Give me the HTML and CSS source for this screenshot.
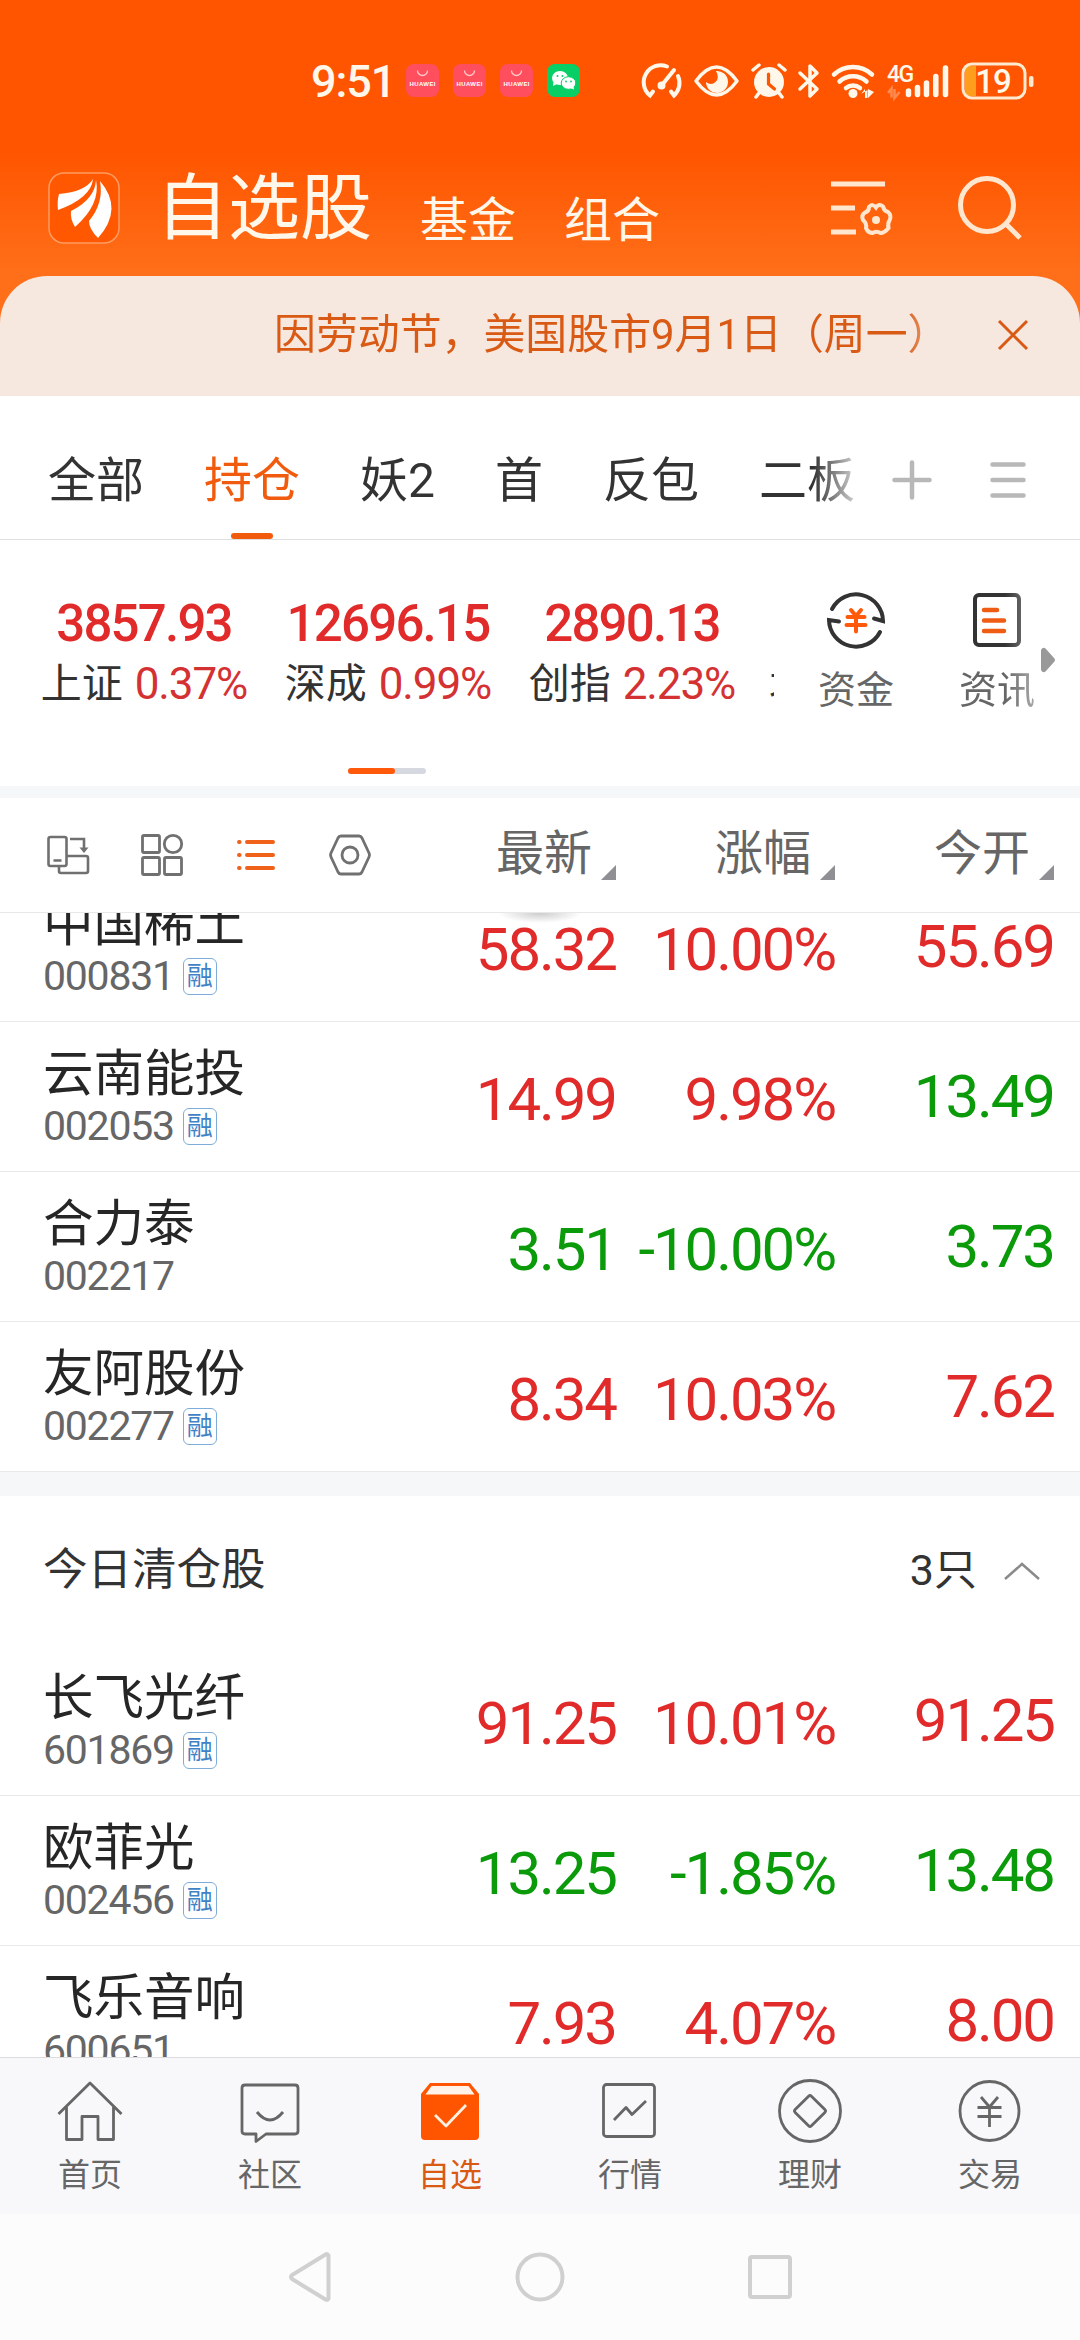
FILE: index.html
```html
<!DOCTYPE html>
<html lang="zh-CN">
<head>
  <meta charset="UTF-8" />
  <meta name="viewport" content="width=device-width, initial-scale=1.0"/>
  <title>自选股</title>
  <link rel="stylesheet" href="styles.css">
</head>
<body>
  <header class="header">
    <div class="status">
      <span class="clock">9:51</span>
      <div class="notifs">
        <svg class="notif" viewBox="0 0 33 33"><rect width="33" height="33" rx="8" fill="#ff4f5e"/><path d="M11.500 6.500a5 5 0 0 0 10 0" fill="none" stroke="#ffc9c9" stroke-width="1.300"/><text x="16.500" y="21.500" text-anchor="middle" textLength="26" class="brand">HUAWEI</text></svg>
        <svg class="notif" viewBox="0 0 33 33"><rect width="33" height="33" rx="8" fill="#ff4f5e"/><path d="M11.500 6.500a5 5 0 0 0 10 0" fill="none" stroke="#ffc9c9" stroke-width="1.300"/><text x="16.500" y="21.500" text-anchor="middle" textLength="26" class="brand">HUAWEI</text></svg>
        <svg class="notif" viewBox="0 0 33 33"><rect width="33" height="33" rx="8" fill="#ff4f5e"/><path d="M11.500 6.500a5 5 0 0 0 10 0" fill="none" stroke="#ffc9c9" stroke-width="1.300"/><text x="16.500" y="21.500" text-anchor="middle" textLength="26" class="brand">HUAWEI</text></svg>
        <svg class="notif" viewBox="0 0 33 33">
          <rect width="33" height="33" rx="8" fill="#07cf66"/>
          <path d="M6.500 18l-.5 4 4-2z" fill="#fff"/>
          <ellipse cx="13" cy="14" rx="8" ry="7" fill="#fff"/>
          <ellipse cx="21.500" cy="19" rx="7.300" ry="6.300" fill="#fff" stroke="#07cf66"/>
          <path d="M23 24l4 1.500-.5-3z" fill="#fff"/>
          <g fill="#07cf66"><circle cx="10.500" cy="12" r="1"/><circle cx="15.500" cy="12" r="1"/><circle cx="19" cy="17.500" r=".9"/><circle cx="24" cy="17.500" r=".9"/></g>
        </svg>
      </div>
      <div class="sys">
        <!-- data saver -->
        <svg width="40" height="36" viewBox="0 0 40 36" fill="none" stroke="#fff7ea" stroke-width="4" stroke-linecap="round"><path d="M25 3.500A17 17 0 0 0 8 32.500l3-4"/><path d="M36 13a17 17 0 0 1-4 19.500l-3-4"/><path d="M20 22L32 7" stroke-width="4"/><circle cx="19.500" cy="22.500" r="2"/></svg>
        <!-- eye comfort -->
        <svg width="47" height="36" viewBox="0 0 47 36"><path d="M3 18Q23.500-10 44 18 23.500 46 3 18z" fill="none" stroke="#fff7ea" stroke-width="3.500" stroke-linejoin="round"/><path d="M23 8a11 11 0 1 1-10 11q5 4 9.500 0T23 8z" fill="#fff7ea"/></svg>
        <!-- alarm -->
        <svg width="36" height="36" viewBox="0 0 36 36"><circle cx="18" cy="19" r="15" fill="#fff7ea"/><path d="M2 7l6-5M34 7l-6-5M8 30l-3 4M28 30l3 4" stroke="#fff7ea" stroke-width="3.500" stroke-linecap="round"/><path d="M17.500 11v10l6 5" fill="none" stroke="#ff5500" stroke-width="3.200" stroke-linecap="round"/></svg>
        <!-- bluetooth -->
        <svg width="22" height="36" viewBox="0 0 22 36" fill="none" stroke="#fff7ea" stroke-width="3.500" stroke-linejoin="round" stroke-linecap="round"><path d="M2 10l17 16-7 7V3l7 7L2 26"/></svg>
        <!-- wifi -->
        <svg width="45" height="36" viewBox="0 0 45 36" fill="none" stroke="#fff7ea" stroke-width="4.500" stroke-linecap="round"><path d="M3 11.500a28 28 0 0 1 38 0M8.500 18.500a20 20 0 0 1 27 0M15 25a11 11 0 0 1 14 0"/><circle cx="22" cy="30.500" r="4.500" fill="#fff7ea" stroke="none"/><path d="M30 31l4-5v9h2.500v-8M37 26v9l6-6" fill="#fff7ea" stroke="none"/></svg>
        <!-- signal -->
        <svg width="63" height="36" viewBox="0 0 63 36"><text x="0" y="18.500" class="net">4G</text><g stroke="#fff7ea" stroke-width="5.500" stroke-linecap="round"><path d="M21.500 28v3.500M30.500 24.500v7M39.500 20v11.500M48.800 13.500v18M58.500 5v26.500"/></g><path d="M1 30l3.500-4.500v9M7.500 26v9l5-6" fill="none" stroke="#ff8a50" stroke-width="2.500"/></svg>
        <!-- battery -->
        <svg width="74" height="40" viewBox="0 0 74 40"><path d="M4 5h11v30H8q-4-1-4-6z" fill="#ff9d1c"/><rect x="2" y="3" width="62" height="34" rx="9" fill="none" stroke="#ffe9cf" stroke-width="3"/><rect x="68" y="15" width="4.500" height="11" rx="2" fill="#ffe9cf"/><text x="32" y="32" text-anchor="middle" class="batt">19</text></svg>
      </div>
    </div>
    <div class="titlebar">
      <svg class="logo" viewBox="0 0 72 72"><rect x="1" y="1" width="70" height="70" rx="15" fill="#ff5800" stroke="#ff9c62" stroke-width="1.500"/><path d="M45 7Q43 26 10 38q-1-9 1-16 26-2 34-15zM48 8q5 24-21 47-5-8-4-16Q47 27 48 8zM52 9q24 28-2 57-9-9-9-17 15-18 11-40z" fill="#fff"/></svg>
      <h1>自选股</h1>
      <span class="subnav">基金</span>
      <span class="subnav">组合</span>
      <svg class="ic-manage" width="64" height="60" viewBox="0 0 64 60" fill="none" stroke="#ffe6cf" stroke-width="5"><path d="M0 8h54M0 32h24M0 56h25"/><path d="M45 31.500q3-4.500 7-1 1 4.500 5 5.500 4 3.500 1.500 8.500-2 2.500-1 7.500-4 5-8 5-4-2.500-8 0-5-.5-6.500-5 1-4.500-3-8-2-5 2-7.500 4-1 4-5.500 3.500-4 7 .5z" stroke-width="4"/><circle cx="45" cy="44" r="4" fill="#ffe6cf" stroke="none"/></svg>
      <svg class="ic-search" width="64" height="64" viewBox="0 0 64 64" fill="none" stroke="#ffe6cf" stroke-width="5"><circle cx="29" cy="29" r="26.500"/><path d="M48 48l14 14"/></svg>
    </div>
  </header>

  <section class="notice">
    <p>因劳动节，美国股市9月1日（周一）</p>
    <svg width="30" height="30" viewBox="0 0 30 30"><path d="M1 1l28 28M29 1L1 29" stroke="#d95a14" stroke-width="3"/></svg>
  </section>

  <nav class="tabs">
    <div class="tab-list">
      <span>全部</span>
      <span class="active">持仓</span>
      <span>妖2</span>
      <span>首</span>
      <span>反包</span>
      <span>二板</span>
    </div>
    <svg width="40" height="40" viewBox="0 0 40 40" stroke="#b8b8b8" stroke-width="4.500" stroke-linecap="round"><path d="M2.500 20h35M20 2.500v35"/></svg>
    <svg width="36" height="36" viewBox="0 0 36 36" stroke="#b8b8b8" stroke-width="4.500" stroke-linecap="round"><path d="M2.500 2.500h31M2.500 18h31M2.500 33.500h31"/></svg>
  </nav>

  <section class="market">
    <div class="market-main">
      <div class="indices">
        <div class="index"><b>3857.93</b><p>上证<i>0.37%</i></p></div>
        <div class="index"><b>12696.15</b><p>深成<i>0.99%</i></p></div>
        <div class="index"><b>2890.13</b><p>创指<i>2.23%</i></p></div>
        <div class="index next"><b></b><p>北</p></div>
      </div>
      <div class="shortcuts">
        <div class="shortcut">
          <svg width="60" height="60" viewBox="0 0 60 60" fill="none" stroke="#333" stroke-width="4" stroke-linecap="round"><path d="M6 19A27 27 0 0 1 57 31l-9-2.500"/><path d="M54 42A27 27 0 0 1 3 30l10 1.500"/><path d="M25 20l5 6 5-6M21.500 27h17M20.500 35h19M30 27v14.500" stroke="#ff5a0c"/></svg>
          <span>资金</span>
        </div>
        <div class="shortcut fade">
          <svg width="60" height="60" viewBox="0 0 60 60" fill="none" stroke="#333" stroke-width="4" stroke-linecap="round"><rect x="8" y="5" width="44" height="50" rx="4"/><path d="M17 20h13M17 30.500h20M17 41h20" stroke="#ee5d13" stroke-width="4.500"/></svg>
          <span>资讯</span>
        </div>
        <svg class="more" width="16" height="26" viewBox="0 0 16 26"><path d="M1 3q2-4 5-1l8 9q2 2 0 4l-8 9q-3 3-5-1z" fill="#999"/></svg>
      </div>
    </div>
    <div class="pager"><span></span></div>
  </section>

  <section class="toolbar">
    <div class="tools">
      <svg width="42" height="42" viewBox="0 0 42 42" fill="none" stroke="#707070" stroke-width="2.600"><rect x="1.500" y="3" width="18" height="29" rx="2"/><path d="M19.500 22H39q2 0 2 2v13q0 2-2 2H14q-2 0-2-2v-5M6.500 26.500h8M23 5h14v12"/><path d="M32.500 13.500L37 19l4.500-5.500z" fill="#707070" stroke="none"/></svg>
      <svg width="42" height="42" viewBox="0 0 42 42" fill="none" stroke="#707070" stroke-width="2.800"><rect x="1.500" y="1.500" width="17" height="17" rx="1.500"/><circle cx="32" cy="10" r="8.700"/><rect x="1.500" y="23.500" width="17" height="17" rx="1.500"/><rect x="23.500" y="23.500" width="17" height="17" rx="1.500"/></svg>
      <svg width="42" height="42" viewBox="0 0 42 42" fill="none" stroke="#f0611a" stroke-width="4" stroke-linecap="round"><path d="M12 8h26M12 21h26M12 34h26M4 8h.6M4 21h.6M4 34h.6"/></svg>
      <svg width="42" height="42" viewBox="0 0 42 42" fill="none" stroke="#707070" stroke-width="2.800"><path d="M12 2h18q2 0 3 2l7 15q1 2 0 4l-7 15q-1 2-3 2H12q-2 0-3-2L2 23q-1-2 0-4L9 4q1-2 3-2z"/><circle cx="21" cy="21" r="8"/></svg>
    </div>
    <div class="col">最新<span class="sort"></span></div>
    <div class="col">涨幅<span class="sort"></span></div>
    <div class="col">今开<span class="sort"></span></div>
  </section>

  <main class="list">
    <div class="pull"></div>
    <div class="row scrolled">
      <div class="stock"><h3>中国稀土</h3><p>000831<em>融</em></p></div>
      <span class="up">58.32</span><span class="up">10.00%</span><span class="up open">55.69</span>
    </div>
    <div class="row">
      <div class="stock"><h3>云南能投</h3><p>002053<em>融</em></p></div>
      <span class="up">14.99</span><span class="up">9.98%</span><span class="down open">13.49</span>
    </div>
    <div class="row">
      <div class="stock"><h3>合力泰</h3><p>002217</p></div>
      <span class="down">3.51</span><span class="down">-10.00%</span><span class="down open">3.73</span>
    </div>
    <div class="row">
      <div class="stock"><h3>友阿股份</h3><p>002277<em>融</em></p></div>
      <span class="up">8.34</span><span class="up">10.03%</span><span class="up open">7.62</span>
    </div>

    <div class="group">
      <h2>今日清仓股</h2>
      <span>3只</span>
      <svg width="36" height="18" viewBox="0 0 36 18" fill="none" stroke="#8a8a8a" stroke-width="2.500"><path d="M1 17L18 2l17 15"/></svg>
    </div>

    <div class="row">
      <div class="stock"><h3>长飞光纤</h3><p>601869<em>融</em></p></div>
      <span class="up">91.25</span><span class="up">10.01%</span><span class="up open">91.25</span>
    </div>
    <div class="row">
      <div class="stock"><h3>欧菲光</h3><p>002456<em>融</em></p></div>
      <span class="down">13.25</span><span class="down">-1.85%</span><span class="down open">13.48</span>
    </div>
    <div class="row">
      <div class="stock"><h3>飞乐音响</h3><p>600651</p></div>
      <span class="up">7.93</span><span class="up">4.07%</span><span class="up open">8.00</span>
    </div>
  </main>

  <footer class="tabbar">
    <div class="tab">
      <svg width="66" height="66" viewBox="0 0 66 66"><path d="M1.500 36L33 5l31.500 31M9.500 29v32.500h15.500V38.500h16v23h15.500V29"/></svg>
      首页
    </div>
    <div class="tab">
      <svg width="66" height="66" viewBox="0 0 66 66"><path d="M8 7h50q3 0 3 3v43q0 3-3 3H29l-10 7.500V56H8q-3 0-3-3V10q0-3 3-3z"/><path d="M20 34q13 16 26 0"/></svg>
      社区
    </div>
    <div class="tab active">
      <svg width="66" height="66" viewBox="0 0 66 66"><path d="M4 16L13 5h40l9 11v42q0 4-4 4H8q-4 0-4-4z" fill="#ff5500" stroke="none"/><path d="M14.500 8h37l6 8.500h-49z" fill="#fff3ea" stroke="none"/><path d="M18 37l11 11 20-21" stroke="#fff0df"/></svg>
      自选
    </div>
    <div class="tab">
      <svg width="66" height="66" viewBox="0 0 66 66"><rect x="6.500" y="6.500" width="51" height="52" rx="3"/><path d="M17 42l12-12.500 6 7L49 23"/></svg>
      行情
    </div>
    <div class="tab">
      <svg width="66" height="66" viewBox="0 0 66 66"><circle cx="33" cy="33" r="30.500"/><rect x="21.500" y="21.500" width="23" height="23" rx="2" transform="rotate(45 33 33)"/></svg>
      理财
    </div>
    <div class="tab">
      <svg width="66" height="66" viewBox="0 0 66 66"><circle cx="32.500" cy="33" r="29.500"/><path d="M24 19l8.500 10L41 19M20.500 29.500h24M20.500 38.500h24M32.500 29v20"/></svg>
      交易
    </div>
  </footer>

  <div class="navkeys">
    <svg width="48" height="52" viewBox="0 0 48 52"><path d="M42.500 4.500v43q-1 2-3 1L6 28q-2-2 0-4L39.500 3.500q2-1 3 1z"/></svg>
    <svg width="52" height="52" viewBox="0 0 52 52"><circle cx="26" cy="26" r="22.500"/></svg>
    <svg width="48" height="52" viewBox="0 0 48 52"><rect x="4" y="6" width="40" height="40" rx="2"/></svg>
  </div>
</body>
</html>
```

FILE: styles.css
```css
* {
  box-sizing: border-box;
}
body {
  margin: 0;
  width: 1080px;
  height: 2340px;
  overflow: hidden;
  display: flex;
  flex-direction: column;
  font-family: Roboto, "Noto Sans CJK SC", sans-serif;
  background: #fff;
  color: #333;
}
h1, h2, h3, p {
  margin: 0;
  font-weight: 400;
}
svg {
  display: block;
  flex: none;
  overflow: visible;
}
i, em {
  font-style: normal;
}

/* header */
.header {
  height: 330px;
  flex: none;
  background: linear-gradient(#ff5500 0, #ff5500 150px, #ff6e18 270px, #ff6e18 100%);
}
.status {
  height: 161px;
  padding: 61px 0 0 311px;
  display: flex;
  align-items: flex-start;
}
.clock {
  width: 95px;
  font-size: 45px;
  font-weight: 500;
  line-height: 41px;
  letter-spacing: -0.025em;
  color: #fff7ea;
}
.notifs {
  display: flex;
  gap: 14px;
  padding-top: 3px;
}
.notif {
  width: 33px;
  height: 33px;
}
.brand {
  font-family: "Liberation Sans", sans-serif;
  font-size: 6px;
  font-weight: 700;
  fill: #fff;
}
.sys {
  display: flex;
  align-items: center;
  gap: 11px;
  margin-left: 62px;
  height: 40px;
}
.net {
  font-size: 23px;
  font-weight: 500;
  letter-spacing: -1.500px;
  fill: #fff7ea;
}
.batt {
  font-size: 33px;
  font-weight: 500;
  letter-spacing: -1px;
  fill: #fff7ea;
}
.titlebar {
  display: flex;
  height: 94px;
  padding-left: 48px;
}
.logo {
  width: 72px;
  height: 72px;
  margin-top: 11px;
}
.titlebar h1 {
  margin-left: 36px;
  font-size: 72px;
  line-height: 96px;
  color: #fff7ea;
}
.subnav {
  margin-left: 48px;
  font-size: 48px;
  line-height: 120px;
  color: #fff7ea;
}
.ic-manage {
  margin: 15px 0 0 171px;
}
.ic-search {
  margin: 15px 0 0 63px;
}

/* scrolling notice */
.notice {
  flex: none;
  height: 120px;
  margin-top: -54px;
  padding: 0 52px 2px 274px;
  display: flex;
  align-items: center;
  justify-content: space-between;
  border-radius: 47px 47px 0 0;
  background: #f6e7df;
}
.notice p {
  width: 682px;
  overflow: hidden;
  white-space: nowrap;
  font-size: 41.900px;
  line-height: 62px;
  color: #d95a14;
  -webkit-mask-image: linear-gradient(to right, #000 630px, transparent 682px);
  mask-image: linear-gradient(to right, #000 630px, transparent 682px);
}

/* group tabs */
.tabs {
  flex: none;
  height: 144px;
  padding: 0 54px 0 48px;
  display: flex;
  align-items: center;
  border-bottom: 1px solid #e0e0e0;
}
.tab-list {
  width: 807px;
  height: 100%;
  display: flex;
  gap: 60px;
  overflow: hidden;
  white-space: nowrap;
  font-size: 48px;
  line-height: 170px;
  -webkit-mask-image: linear-gradient(to right, #000 765px, transparent 820px);
  mask-image: linear-gradient(to right, #000 765px, transparent 820px);
}
.tab-list span {
  flex: none;
}
.tab-list .active {
  color: #f15b0e;
  display: flex;
  flex-direction: column;
  align-items: center;
  height: 143px;
}
.tab-list .active::after {
  content: "";
  width: 42px;
  height: 6px;
  flex: none;
  margin-top: -33px;
  border-radius: 3px;
  background: #f15b0e;
}
.tabs > svg {
  margin: 24px 0 0 37px;
}
.tabs > svg:last-child {
  margin-left: 58px;
}

/* market indices */
.market {
  flex: none;
  height: 258px;
  padding-top: 50px;
  border-bottom: 12px solid #f6f7f9;
}
.market-main {
  height: 178px;
  display: flex;
}
.indices {
  width: 774px;
  padding-left: 22px;
  display: flex;
  overflow: hidden;
}
.index {
  flex: none;
  width: 244px;
  text-align: center;
}
.index b {
  display: block;
  height: 66px;
  font-size: 51px;
  font-weight: 500;
  line-height: 67px;
  letter-spacing: -0.035em;
  color: #e12a2a;
}
.index p {
  display: flex;
  justify-content: center;
  gap: 12px;
  font-size: 41px;
  line-height: 60px;
  margin-top: -2px;
}
.index i {
  font-size: 44px;
  letter-spacing: -0.025em;
  color: #d43232;
}
.next p {
  justify-content: flex-start;
  padding-left: 15px;
}
.shortcuts {
  display: flex;
  align-items: flex-start;
  padding-left: 40px;
}
.shortcut {
  width: 84px;
  display: flex;
  flex-direction: column;
  align-items: center;
  gap: 15px;
  font-size: 38px;
  line-height: 50px;
  color: #666;
}
.fade {
  margin-left: 57px;
  -webkit-mask-image: linear-gradient(to right, #000 50px, rgba(0, 0, 0, 0.500) 84px);
  mask-image: linear-gradient(to right, #000 50px, rgba(0, 0, 0, 0.500) 84px);
}
.more {
  margin: 57px 0 0 1px;
}
.pager {
  width: 78px;
  height: 6px;
  margin-left: 348px;
  border-radius: 3px;
  background: #d5d8de;
}
.pager span {
  display: block;
  width: 47px;
  height: 6px;
  border-radius: 3px;
  background: #ff5a0c;
}

/* column heads */
.toolbar, .row {
  display: grid;
  grid-template-columns: 1fr 219px 219px 219px;
  padding: 0 26px 0 43px;
}
.toolbar {
  flex: none;
  height: 115px;
  align-items: center;
  border-bottom: 1px solid #e8e8e8;
}
.tools {
  display: flex;
  gap: 52px;
  padding-left: 4px;
}
.col {
  display: flex;
  justify-content: flex-end;
  align-items: flex-end;
  font-size: 48px;
  line-height: 60px;
  margin-top: -2px;
  color: #666;
}
.sort {
  margin: 0 0 4px 9px;
  border-left: 15px solid transparent;
  border-bottom: 15px solid #8f8f94;
}

/* stocks */
.list {
  height: 1144px;
  flex: none;
  overflow: hidden;
}
.pull {
  height: 10px;
  background: radial-gradient(ellipse 42px 10px at 540px 0, #ccc, transparent);
}
.row {
  height: 150px;
  border-bottom: 1px solid #e9e9e9;
}
.scrolled {
  margin-top: -51px;
}
.stock h3 {
  margin-top: 22px;
  font-size: 50.500px;
  line-height: 60px;
  white-space: nowrap;
  color: #262626;
}
.stock p {
  display: flex;
  align-items: center;
  font-size: 41px;
  line-height: 44px;
  letter-spacing: -0.030em;
  color: #666;
}
.stock em {
  width: 34px;
  height: 37px;
  margin-left: 9px;
  border: 1.500px solid #7fadd9;
  border-radius: 6px;
  font-size: 26px;
  line-height: 34px;
  letter-spacing: 0;
  text-align: center;
  color: #3f83c6;
}
.row > span {
  text-align: right;
  font-size: 60px;
  line-height: 155px;
  letter-spacing: -0.035em;
  white-space: nowrap;
}
.row > .open {
  line-height: 149px;
}
.up {
  color: #e12a2a;
}
.down {
  color: #0a9a0a;
}
.group {
  height: 174px;
  padding: 0 40px 3px 43px;
  display: flex;
  align-items: center;
  border-top: 24px solid #f6f7f9;
}
.group h2 {
  flex: 1;
  font-size: 44.500px;
  line-height: 60px;
}
.group span {
  font-size: 43px;
  line-height: 60px;
}
.group svg {
  margin: 2px 0 0 27px;
}

/* bottom bar */
.tabbar {
  flex: none;
  height: 157px;
  display: flex;
  border-top: 1px solid #dcdcde;
  background: #f8f8fa;
}
.tab {
  flex: 1;
  display: flex;
  flex-direction: column;
  align-items: center;
  padding-top: 20px;
  font-size: 32px;
  line-height: 40px;
  gap: 11px;
  color: #666;
}
.tab svg {
  fill: none;
  stroke: #666;
  stroke-width: 2.800;
  stroke-linejoin: round;
}
.tab.active {
  color: #d95a14;
}
.navkeys {
  flex: 1;
  display: flex;
  justify-content: center;
  align-items: center;
  gap: 180px;
  background: #fcfcfc;
}
.navkeys svg {
  fill: none;
  stroke: #d0d0d0;
  stroke-width: 4;
}
```
